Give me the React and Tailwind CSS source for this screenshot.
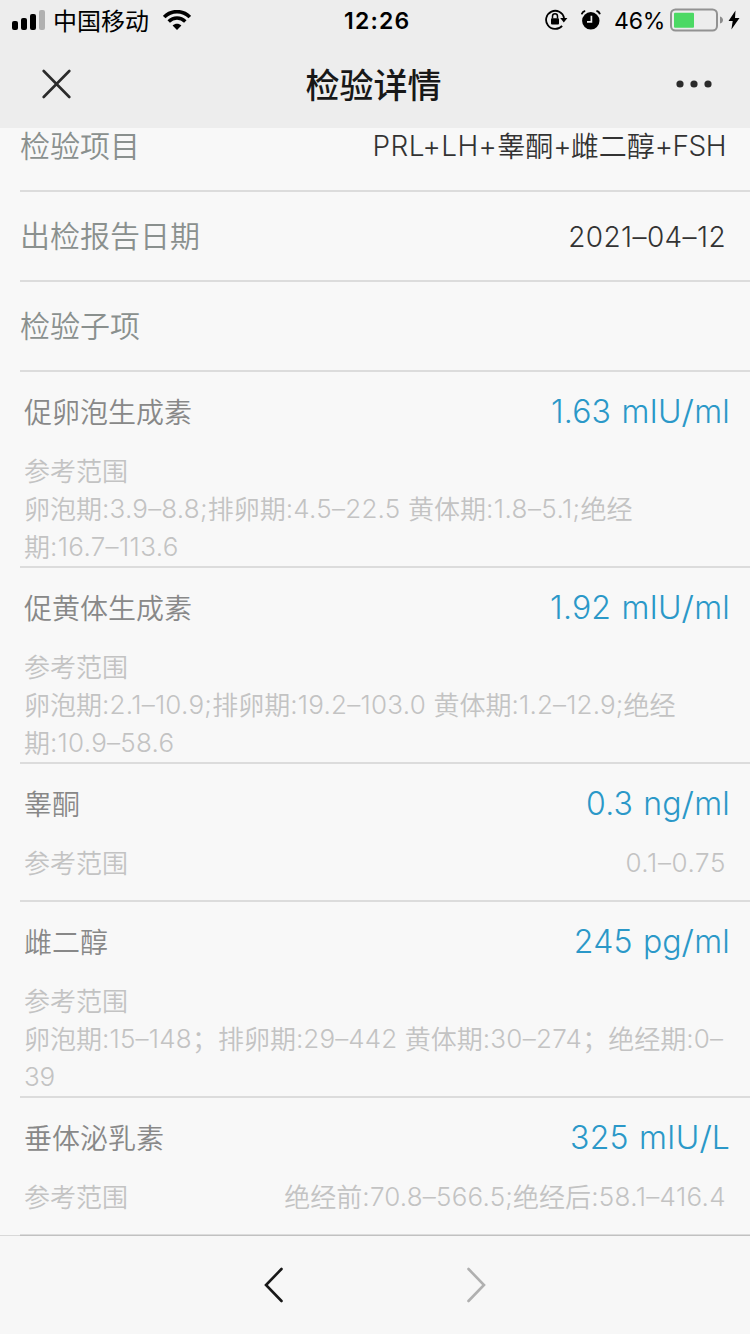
import React from "react";

const rows = [
  { label: "检验项目", value: "PRL+LH+睾酮+雌二醇+FSH", tracking: ["tracking-[0.4px]", "tracking-[-0.8px]", "tracking-[-0.5px]"] },
  { label: "出检报告日期", value: "2021–04–12", tracking: ["tracking-[0.4px]"] },
  { label: "检验子项", value: "" },
];

const items = [
  {
    name: "促卵泡生成素",
    value: "1.63 mIU/ml",
    lines: [
      { text: "卵泡期:3.9–8.8;排卵期:4.5–22.5 黄体期:1.8–5.1;绝经", tracking: ["tracking-[0.2px]", "tracking-[0.25px]", "tracking-[0.4px]"] },
      { text: "期:16.7–113.6", tracking: ["tracking-[0.35px]"] },
    ],
  },
  {
    name: "促黄体生成素",
    value: "1.92 mIU/ml",
    lines: [
      { text: "卵泡期:2.1–10.9;排卵期:19.2–103.0 黄体期:1.2–12.9;绝经", tracking: ["tracking-[0.25px]", "tracking-[0.25px]", "tracking-[0.15px]"] },
      { text: "期:10.9–58.6", tracking: ["tracking-[0.25px]"] },
    ],
  },
  { name: "睾酮", value: "0.3 ng/ml", range: { text: "0.1–0.75", tracking: ["tracking-[0.6px]"] } },
  {
    name: "雌二醇",
    value: "245 pg/ml",
    lines: [
      { text: "卵泡期:15–148；排卵期:29–442 黄体期:30–274；绝经期:0–", tracking: ["tracking-[0.2px]", "tracking-[0.1px]", "tracking-[0.3px]", "tracking-[0.2px]"] },
      { text: "39", tracking: ["tracking-[-0.2px]"] },
    ],
  },
  {
    name: "垂体泌乳素",
    value: "325 mIU/L",
    range: { text: "绝经前:70.8–566.5;绝经后:58.1–416.4", tracking: ["tracking-[0.2px]", "tracking-[0.35px]"] },
  },
];

/* Sets Han runs and Latin runs separately so that each keeps its own spacing. */
function Mixed({ text, tracking = [] }) {
  const runs = text.match(/[\u4e00-\u9fff；]+|[^\u4e00-\u9fff；]+/g) || [];
  let latin = 0;
  return runs.map((run, i) =>
    /[\u4e00-\u9fff；]/.test(run) ? (
      <span key={i} className="align-[-1px]">{run}</span>
    ) : (
      <span key={i} className={tracking[latin++]}>{run}</span>
    )
  );
}

function Measure({ value }) {
  const [amount, unit] = value.split("/");
  return (
    <span className="text-[32px] leading-[78px] tracking-[0.2px] text-[#2b98c8] [word-spacing:1px]">
      {amount}
      <span className="mx-[0.5px] inline-block scale-x-115">/</span>
      {unit}
    </span>
  );
}

function StatusBar() {
  return (
    <div className="flex h-10 items-center pl-3 pr-[9px] text-black">
      <svg width="34" height="20" viewBox="0 0 34 20">
        <rect x="0" y="11" width="6" height="9" rx="2" />
        <rect x="9" y="8" width="6" height="12" rx="2" />
        <rect x="18" y="4" width="6" height="16" rx="2" />
        <rect x="27" y="0" width="6" height="20" rx="2" fill="#b0b0b0" />
      </svg>
      <span className="ml-[7px] w-[96px] whitespace-nowrap pt-[3px] text-[24px] leading-10">中国移动</span>
      <svg className="ml-[14px]" width="28" height="20" viewBox="0 0 28 20" fill="none" stroke="#000">
        <path d="M1.2 7.1C8.4-.2 19.6-.2 26.8 7.1" strokeWidth="3.6" />
        <path d="M5.7 11.6c4.8-4.7 11.8-4.7 16.6 0" strokeWidth="3.5" />
        <path d="M9.6 15.5c2.6-2.5 6.2-2.5 8.8 0L14 19.9z" fill="#000" stroke="none" />
      </svg>
      <span className="ml-[153px] w-[67px] whitespace-nowrap pt-[2px] text-[23px] leading-10 font-semibold tracking-[1.2px]">12:26</span>
      <svg className="ml-[134px]" width="23" height="22" viewBox="0 0 23 22">
        <path d="M17.1 16.8A9.1 9.1 0 1 1 19.1 9" fill="none" stroke="#000" strokeWidth="1.8" />
        <path d="M15.2 9h7.2l-3.6 4.6z" />
        <rect x="6" y="9.2" width="8" height="6.4" rx="1" />
        <path d="M7.5 9.5V7.2a2.5 2.5 0 0 1 5 0v2.3" fill="none" stroke="#000" strokeWidth="1.5" />
      </svg>
      <svg className="ml-[13px]" width="20" height="20" viewBox="0 0 20 20">
        <circle cx="9.8" cy="10.8" r="8.7" />
        <path d="M10.4 5.8v6H6" fill="none" stroke="#ededed" strokeWidth="1.7" />
        <path d="M.7 4.3C1.2 2.3 2.2 1.3 4.2.9M15.4.9c2 .4 3 1.4 3.5 3.4" fill="none" stroke="#000" strokeWidth="1.8" />
      </svg>
      <span className="ml-[13px] w-[54px] whitespace-nowrap pt-[2px] text-[23px] leading-10 tracking-[-0.2px]">46%</span>
      <svg className="ml-[2px]" width="54" height="24" viewBox="0 0 54 24">
        <rect x="1" y="1.5" width="46" height="21" rx="4.5" fill="none" stroke="#929292" strokeWidth="2" />
        <rect x="4" y="4.7" width="20" height="15" rx="1" fill="#4cd964" />
        <path d="M50 8.5c4 1 4 6 0 7z" fill="#8c8c8c" />
      </svg>
      <svg className="ml-[4px]" width="12" height="20" viewBox="0 0 12 20">
        <path d="M7.5.5.5 11h4.2L3.4 19.5 11.5 8H7z" />
      </svg>
    </div>
  );
}

function NavBar() {
  return (
    <div className="flex h-[88px] items-center justify-between pl-[42px] pr-[38px]">
      <svg width="29" height="30" viewBox="0 0 29 30" fill="none" stroke="#2b2b2b" strokeWidth="2.6" strokeLinecap="round">
        <path d="m1.7 2 25.6 26M27.3 2 1.7 28" />
      </svg>
      <h1 className="pt-[3px] text-[34px] leading-[85px] font-medium text-[#181818]">检验详情</h1>
      <svg width="36" height="8" viewBox="0 0 36 8" fill="#2b2b2b">
        <circle cx="4" cy="4" r="3.6" />
        <circle cx="18" cy="4" r="3.6" />
        <circle cx="32" cy="4" r="3.6" />
      </svg>
    </div>
  );
}

function Item({ item }) {
  return (
    <li className="ml-5 border-b-2 border-[#dcdcdc]">
      <div className="flex h-20 items-center justify-between pl-1 pr-5">
        <span className="pt-[3px] text-[28px] leading-[77px] text-[#888]">{item.name}</span>
        <Measure value={item.value} />
      </div>
      <div className={"flex justify-between pl-1 pr-6 text-[26px] leading-[38px] whitespace-nowrap text-[#c3c3c3] " + (item.range ? "h-14" : "")}>
        <div>
          <div className="h-[38px]"><Mixed text="参考范围" /></div>
          {item.lines && item.lines.map((l) => (
            <div key={l.text} className="h-[38px]"><Mixed text={l.text} tracking={l.tracking} /></div>
          ))}
        </div>
        {item.range && <div><Mixed text={item.range.text} tracking={item.range.tracking} /></div>}
      </div>
    </li>
  );
}

export default function App() {
  return (
    <div className="flex h-[1334px] w-[750px] flex-col overflow-hidden bg-[#f8f8f8] font-['Inter','Noto_Sans_CJK_SC',sans-serif] font-[350]">
      <header className="h-32 shrink-0 bg-[#ededed] font-normal">
        <StatusBar />
        <NavBar />
      </header>
      <main className="h-[1108px] shrink-0 overflow-hidden">
        <div className="-mt-[26px]">
          {rows.map((r) => (
            <div key={r.label} className="ml-5 flex h-[90px] items-center justify-between border-b-2 border-[#dcdcdc] pr-6">
              <span className="pb-px text-[30px] leading-[86px] text-[#8a908e]">{r.label}</span>
              <span className="pt-px text-[28px] leading-[88px] text-[#333]">
                <Mixed text={r.value} tracking={r.tracking} />
              </span>
            </div>
          ))}
        </div>
        <ul>
          {items.map((it) => (
            <Item key={it.name} item={it} />
          ))}
        </ul>
      </main>
      <footer className="relative -mt-px flex grow items-center justify-center gap-[182px] border-t border-black/12 bg-[#f7f7f7] bg-clip-padding">
        <svg width="20" height="36" viewBox="0 0 20 36" fill="none" stroke="#181818" strokeWidth="2.6" strokeLinecap="round">
          <path d="M17.5 2 2 18l15.5 16" />
        </svg>
        <svg width="20" height="36" viewBox="0 0 20 36" fill="none" stroke="#b0b0b0" strokeWidth="2.6" strokeLinecap="round">
          <path d="m2.5 2 15.5 16-15.5 16" />
        </svg>
      </footer>
    </div>
  );
}
